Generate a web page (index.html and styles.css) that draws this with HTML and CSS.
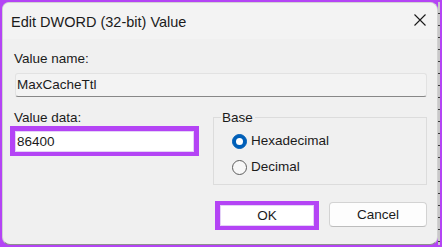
FILE: index.html
```html
<!DOCTYPE html>
<html>
<head>
<meta charset="utf-8">
<link rel="stylesheet" href="styles.css">
</head>
<body>
<div class="frame">
  <div class="dialog">
    <div class="titlebar">
      <span class="title">Edit DWORD (32-bit) Value</span>
      <svg class="close" width="12" height="12" viewBox="0 0 12 12">
        <path d="M0.5 0.5 L11.5 11.5 M11.5 0.5 L0.5 11.5" stroke="#1a1a1a" stroke-width="1.1" fill="none"/>
      </svg>
    </div>
    <div class="content">
      <div class="label">Value name:</div>
      <div class="field readonly">MaxCacheTtl</div>
      <div class="row">
        <div class="left">
          <div class="label">Value data:</div>
          <div class="hl">
            <div class="field edit">86400</div>
          </div>
        </div>
        <div class="group">
          <div class="group-title">Base</div>
          <div class="radio-item first"><span class="radio checked"></span><span class="rlabel">Hexadecimal</span></div>
          <div class="radio-item"><span class="radio"></span><span class="rlabel">Decimal</span></div>
        </div>
      </div>
      <div class="buttons">
        <div class="hl-btn"><div class="btn ok">OK</div></div>
        <div class="btn cancel">Cancel</div>
      </div>
    </div>
  </div>
  <div class="strip"></div>
</div>
</body>
</html>
```

FILE: styles.css
```css
* { box-sizing: border-box; }
html, body { margin: 0; padding: 0; }
body {
  width: 442px;
  height: 247px;
  overflow: hidden;
  background: #b444f5;
  font-family: "Liberation Sans", Arial, sans-serif;
  color: #1b1b1b;
}
.frame {
  display: flex;
  padding: 2px 0 2px 2px;
  height: 247px;
}
.dialog {
  width: 436px;
  height: 243px;
  background: #f0f0f0;
  border: 1px solid #d2d2d2;
  border-bottom-color: #8e8e8e;
  border-radius: 7px 8px 8px 8px;
  overflow: hidden;
  display: flex;
  flex-direction: column;
}
.strip {
  width: 2px;
  height: 243px;
  background: repeating-linear-gradient(to bottom, #c9c9c9 0 11px, #3a3a3a 11px 12px);
}
.titlebar {
  height: 36px;
  background: #f3f3f3;
  display: flex;
  align-items: center;
  justify-content: space-between;
  padding: 0 11px 0 8px;
}
.title {
  font-size: 14.5px;
  line-height: 18px;
  margin-top: 1px;
}
.close { display: block; margin-top: -2px; }
.content {
  padding: 12px 10px 0 11px;
  display: flex;
  flex-direction: column;
  font-size: 13.5px;
}
.label { line-height: 16px; }
.field {
  line-height: 16px;
  display: flex;
  align-items: center;
}
.readonly {
  margin-top: 6px;
  margin-left: 1px;
  height: 24px;
  background: #f3f3f3;
  border: 1px solid #e2e2e2;
  border-bottom-color: #878787;
  border-radius: 3px;
  padding-left: 1px;
}
.row {
  display: flex;
  margin-top: 13px;
  align-items: flex-start;
}
.left {
  display: flex;
  flex-direction: column;
}
.hl {
  margin-left: -4px;
  width: 189px;
  border: 5px solid #b444f5;
  border-bottom-width: 4px;
}
.edit {
  height: 21px;
  background: #ffffff;
  border: 1px solid #e4d2f7;
  padding-left: 1px;
}
.group {
  margin-top: 7px;
  margin-left: 14px;
  width: 214px;
  border: 1px solid #dcdcdc;
  display: flex;
  flex-direction: column;
  padding: 0 0 9px 18px;
}
.group-title {
  margin-top: -8px;
  margin-left: -11px;
  align-self: flex-start;
  line-height: 16px;
  background: #f0f0f0;
  padding: 0 2px 0 1px;
}
.radio-item {
  display: flex;
  align-items: center;
  height: 16px;
  margin-top: 10px;
}
.radio-item.first { margin-top: 7px; }
.radio {
  width: 15px;
  height: 15px;
  border-radius: 50%;
  border: 1px solid #5d5d5d;
  background: #f7f7f7;
  display: flex;
  align-items: center;
  justify-content: center;
  flex: none;
}
.radio.checked {
  background: #005fb8;
  border-color: #005fb8;
}
.radio.checked::after {
  content: "";
  width: 7px;
  height: 7px;
  border-radius: 50%;
  background: #ffffff;
}
.rlabel { margin-left: 4px; line-height: 16px; }
.buttons {
  display: flex;
  justify-content: flex-end;
  align-items: flex-start;
  gap: 10px;
  margin-top: 16px;
}
.hl-btn {
  border: 5px solid #b444f5;
  border-top-width: 4px;
  border-bottom-width: 4px;
}
.btn {
  display: flex;
  align-items: center;
  justify-content: center;
  line-height: 16px;
}
.ok {
  width: 94px;
  height: 21px;
  background: #ffffff;
  border: 1px solid #e4d2f7;
}
.cancel {
  margin-top: 1px;
  width: 98px;
  height: 25px;
  background: #fdfdfd;
  border: 1px solid #d3d3d3;
  border-bottom-color: #bdbdbd;
  border-radius: 4px;
}
```
